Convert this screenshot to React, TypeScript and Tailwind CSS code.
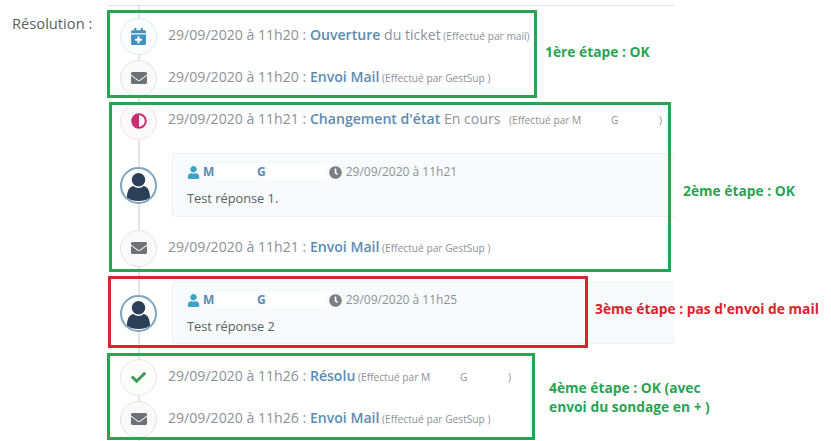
import React from 'react';
import { FaCalendarPlus, FaEnvelope, FaAdjust, FaCheck, FaUser, FaClock } from 'react-icons/fa';

const Circle: React.FC<{ className: string; children: React.ReactNode }> = ({ className, children }) => (
  <div className={`relative z-10 w-[37px] h-[37px] shrink-0 rounded-full border flex items-center justify-center ${className}`}>
    {children}
  </div>
);

const MailDot = () => (
  <Circle className="bg-[#fafafa] border-[#e3e3e3] text-[#6d7279]">
    <FaEnvelope className="w-4 h-4" />
  </Circle>
);

const Avatar = () => (
  <div className="relative z-10 w-[37px] h-[37px] shrink-0 rounded-full border-2 border-[#7ea5c0] bg-white flex items-center justify-center overflow-hidden">
    <svg viewBox="0 0 32 32" className="w-[31px] h-[31px]">
      <circle cx="16" cy="10" r="7" fill="#2b3f58" />
      <path d="M4 29c0-8 3-12 7-12.500 1.500 1.500 3 2 5 2s3.500-.5 5-2c4 .5 7 4.500 7 12.500-3 2-7 3-12 3s-9-1-12-3z" fill="#2b3f58" />
    </svg>
  </div>
);

const Stamp: React.FC<{ date: string }> = ({ date }) => (
  <span className="text-[#8c9298]">{date} : </span>
);

const Row: React.FC<{ icon: React.ReactNode; date: string; title: string; children?: React.ReactNode; className?: string }> = ({
  icon,
  date,
  title,
  children,
  className = '',
}) => (
  <div className={`h-[42px] flex items-center gap-[11px] pl-[12px] whitespace-nowrap ${className}`}>
    {icon}
    <p className="text-[14.1px] leading-5 pb-px">
      <Stamp date={date} />
      <span className="font-semibold text-[#5d8bb0]">{title}</span>
      {children}
    </p>
  </div>
);

const Small: React.FC<{ children: React.ReactNode; className?: string }> = ({ children, className = '' }) => (
  <span className={`text-[10.2px] text-[#8c9298] ${className}`}> {children}</span>
);

const Reply: React.FC<{ time: string; text: string; tall?: boolean; className?: string }> = ({
  time,
  text,
  tall,
  className = '',
}) => (
  <div className={`flex items-center gap-[15px] pl-[12px] ${className}`}>
    <Avatar />
    <div className={`flex-1 rounded-l border border-r-0 border-[#edf1f3] bg-[#f7fbfc] pl-[14px] ${tall ? 'h-[64px] pt-[8px]' : 'h-[62px] pt-[7px]'}`}>
      <div className="flex items-center h-5 text-[12px] whitespace-nowrap">
        <FaUser className="w-[13px] h-[13px] text-[#3fa3c6]" />
        <span className="ml-[3px] font-bold text-[#5d8bb0] w-[11px]">M</span>
        <span className="w-[43px] h-4 bg-white" />
        <span className="font-bold text-[#5d8bb0]">G</span>
        <span className="w-[60px] h-4 bg-white" />
        <FaClock className="ml-[3px] w-[13px] h-[13px] text-[#7b7f84]" />
        <span className="ml-[4px] text-[#8c9298]">{time}</span>
      </div>
      <p className="mt-[6px] text-[12.8px] leading-5 text-[#5a5f63]">{text}</p>
    </div>
  </div>
);

// cadres et notes ajoutes par dessus la capture
const frames = [
  'left-[107px] top-[10px] w-[430px] h-[88px] border-[#27a553]',
  'left-[109px] top-[102px] w-[562px] h-[170px] border-[#27a553]',
  'left-[108px] top-[276px] w-[480px] h-[72px] border-[#d9232e]',
  'left-[107px] top-[353px] w-[428px] h-[87px] border-[#27a553]',
];

const notes = [
  { text: '1ère étape : OK', cls: 'left-[545px] top-[43px] text-[#27a553]' },
  { text: '2ème étape : OK', cls: 'left-[683px] top-[182px] text-[#27a553]' },
  { text: "3ème étape : pas d'envoi de mail", cls: 'left-[595px] top-[300px] text-[#d9232e]' },
  { text: '4ème étape : OK (avec', cls: 'left-[549px] top-[379px] text-[#27a553]' },
  { text: 'envoi du sondage en + )', cls: 'left-[549px] top-[398px] text-[#27a553]' },
];

export default function App() {
  return (
    <div className="relative w-[831px] h-[441px] overflow-hidden bg-white flex font-['Open_Sans',sans-serif]">
      <div className="w-[108px] shrink-0 pl-3 pt-[13px] text-[14.7px] leading-5 text-[#5a5f63]">Résolution :</div>

      <div className="relative w-[567px] h-[441px] pt-[9px] mt-[5px] border-t border-[#e2e2e2]">
        <div className="absolute left-[30px] top-0 bottom-0 w-[2px] bg-[#e3e5e8]" />

        <Row
          date="29/09/2020 à 11h20"
          title="Ouverture"
          icon={
            <Circle className="bg-[#fbfdfe] border-[#dcebf2] text-[#3d93bd]">
              <FaCalendarPlus className="w-[15px] h-[17px]" />
            </Circle>
          }
        >
          <span className="text-[#8c9298]"> du ticket</span>
          <Small> (Effectué par mail)</Small>
        </Row>
        <Row date="29/09/2020 à 11h20" title="Envoi Mail" icon={<MailDot />}>
          <Small>(Effectué par GestSup )</Small>
        </Row>
        <Row
          className="mt-px [&>p]:pb-[3px]"
          date="29/09/2020 à 11h21"
          title="Changement d'état"
          icon={
            <Circle className="bg-[#fdf9fb] border-[#f3e0e9] text-[#c5326f]">
              <FaAdjust className="w-4 h-4" />
            </Circle>
          }
        >
          <span className="text-[#8c9298]"> En cours</span>
          <Small className="ml-[6px]">(Effectué par M</Small>
          <Small className="ml-[27px]">G</Small>
          <Small className="ml-[38px]">)</Small>
        </Row>

        <Reply className="mt-[11px]" tall time="29/09/2020 à 11h21" text="Test réponse 1." />
        <Row className="mt-[10px]" date="29/09/2020 à 11h21" title="Envoi Mail" icon={<MailDot />}>
          <Small>(Effectué par GestSup )</Small>
        </Row>
        <Reply className="mt-[13px]" time="29/09/2020 à 11h25" text="Test réponse 2" />

        <Row
          className="mt-[12px]"
          date="29/09/2020 à 11h26"
          title="Résolu"
          icon={
            <Circle className="bg-[#fbfdfb] border-[#e2ece2] text-[#3f9a55]">
              <FaCheck className="w-[15px] h-[15px]" />
            </Circle>
          }
        >
          <Small>(Effectué par M</Small>
          <Small className="ml-[27px]">G</Small>
          <Small className="ml-[38px]">)</Small>
        </Row>
        <Row date="29/09/2020 à 11h26" title="Envoi Mail" icon={<MailDot />}>
          <Small>(Effectué par GestSup )</Small>
        </Row>
      </div>

      {frames.map((cls) => (
        <div key={cls} className={`absolute z-20 border-[3px] ${cls}`} />
      ))}
      {notes.map((n) => (
        <div key={n.text} className={`absolute z-20 whitespace-nowrap text-[13.8px] leading-[18px] font-bold ${n.cls}`}>
          {n.text}
        </div>
      ))}
    </div>
  );
}
